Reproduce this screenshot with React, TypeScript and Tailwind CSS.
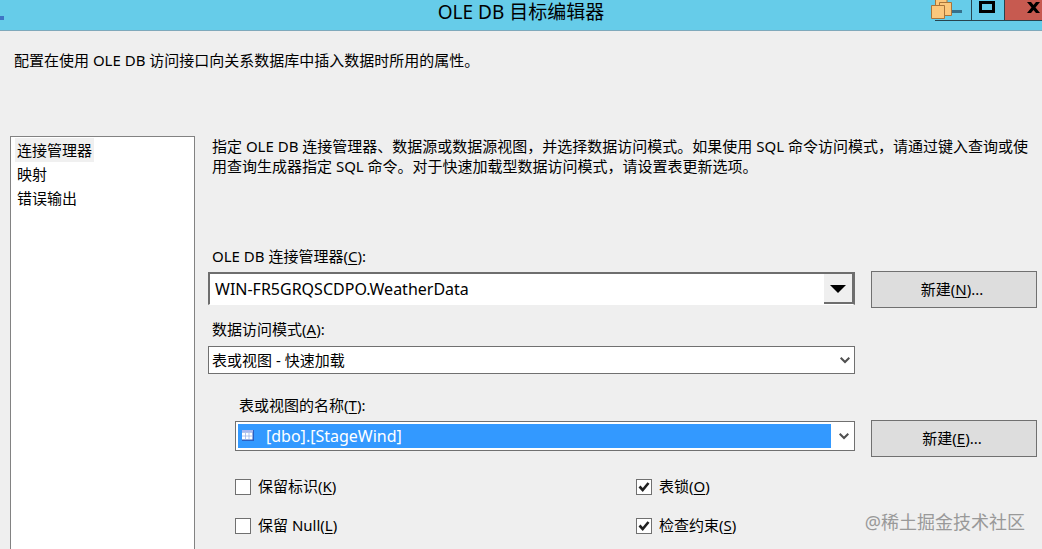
import { useState } from 'react';
import type { ReactNode } from 'react';

const pages = ['连接管理器', '映射', '错误输出'];

const options = [
  { id: 'keep-identity', text: '保留标识', accessKey: 'K', checked: false },
  { id: 'table-lock', text: '表锁', accessKey: 'O', checked: true },
  { id: 'keep-null', text: '保留 Null', accessKey: 'L', checked: false },
  { id: 'check-constraints', text: '检查约束', accessKey: 'S', checked: true },
];

function ChevronIcon() {
  return (
    <svg viewBox="0 0 10 8" className="pointer-events-none absolute right-[5px] top-1/2 h-2 w-2.5 -translate-y-1/2">
      <path d="M.7 1.700 L5 6 L9.300 1.700" fill="none" stroke="#505050" strokeWidth="2" />
    </svg>
  );
}

function FoldersIcon() {
  return (
    <svg viewBox="0 0 22 20" className="pointer-events-none absolute -left-1 top-0 h-5 w-[22px]">
      <g fill="#fbc77c" stroke="#a9743a">
        <path d="M4.500 -1 H16 V6 H4.500 Z" />
        <path d="M8.500 2.500 H20.500 V15.500 H8.500 Z" />
        <path d="M.5 5.500 H13.500 V18.500 H.5 Z" />
      </g>
    </svg>
  );
}

function TableIcon() {
  return (
    <svg viewBox="0 0 12 11" className="pointer-events-none absolute left-1.5 top-2 h-[11px] w-3">
      <path d="M0 0 H12 V11 H0 Z" fill="#2c5fc0" />
      <path d="M0 0 H11 V2.500 H0 Z" fill="#a9b9f0" />
      <path d="M0 2.500 H10.500 V9.500 H0 Z" fill="#fff" />
      <path d="M3.500 3 V9.500 M7 3 V9.500 M0 6 H10.500" stroke="#9db4ea" strokeWidth=".8" />
    </svg>
  );
}

function TitleBar() {
  return (
    <header className="relative flex h-[31px] shrink-0 items-start justify-end border-b border-[#7fa9bb] bg-[#66cce9]">
      <span className="absolute left-0 top-4 h-1 w-1 bg-[#3f74c4]" />
      <h1 className="absolute inset-x-0 top-0 text-center text-[19px] leading-6">OLE DB 目标编辑器</h1>
      <div className="relative flex h-[21px]">
        <button aria-label="最小化" className="relative w-9 border-b border-[#27444f]">
          <span className="absolute left-4 top-2.5 h-[3px] w-[11px] bg-[#34708c]" />
          <FoldersIcon />
        </button>
        <button aria-label="最大化" className="flex w-[34px] justify-center border-x border-b border-[#27444f] pr-0.5 pt-px">
          <span className="h-3 w-4 border-3 border-black" />
        </button>
        <button aria-label="关闭" className="flex w-[37px] justify-end border-b border-[#27444f] bg-[#c75a50] pr-0.5 pt-0.5">
          <svg viewBox="0 0 13 11" className="h-[11px] w-[13px]">
            <path d="M0 0 H4 L6.500 3 L9 0 H13 L8.500 5.500 L13 11 H9 L6.500 8 L4 11 H0 L4.500 5.500 Z" />
          </svg>
        </button>
      </div>
    </header>
  );
}

function FieldLabel({ id, accessKey, children }: { id: string; accessKey: string; children: ReactNode }) {
  return (
    <label htmlFor={id} className="block px-1 leading-5">
      {children}(<u className="underline-offset-2">{accessKey}</u>):
    </label>
  );
}

function NewButton({ accessKey }: { accessKey: string }) {
  return (
    <button className="h-[37px] border border-[#707070] bg-[#dddddd] pr-1">
      新建(<u className="underline-offset-2">{accessKey}</u>)...
    </button>
  );
}

export default function App() {
  const [page, setPage] = useState(pages[0]);
  const [checked, setChecked] = useState(options.filter((o) => o.checked).map((o) => o.id));

  const toggle = (id: string) => {
    setChecked((prev) => (prev.includes(id) ? prev.filter((item) => item !== id) : [...prev, id]));
  };

  return (
    <div className="relative flex h-screen flex-col overflow-hidden bg-[#efefef] font-['Noto_Sans','Noto_Sans_CJK_SC',sans-serif] text-[15px] text-black">
      <TitleBar />
      <p className="h-[105px] shrink-0 px-3.5 pt-[19px] leading-5">配置在使用 OLE DB 访问接口向关系数据库中插入数据时所用的属性。</p>

      <div className="flex min-h-0 flex-1 pl-2.5 pr-[5px]">
        <ul className="w-[185px] shrink-0 border border-b-0 border-[#828282] bg-white pl-1 pt-px">
          {pages.map((name) => (
            <li key={name} className="flex">
              <button
                onClick={() => setPage(name)}
                className={`h-6 px-0.5 leading-6 ${page === name ? 'bg-[#f0f0f0]' : ''}`}
              >
                {name}
              </button>
            </li>
          ))}
        </ul>

        <main className="ml-[13px] min-w-0 flex-1">
          <p className="h-[110px] px-1 leading-5">
            指定 OLE DB 连接管理器、数据源或数据源视图，并选择数据访问模式。如果使用 SQL 命令访问模式，请通过键入查询或使用查询生成器指定 SQL 命令。对于快速加载型数据访问模式，请设置表更新选项。
          </p>

          <FieldLabel id="connection" accessKey="C">OLE DB 连接管理器</FieldLabel>
          <div className="mt-[5px] grid grid-cols-[1fr_166px] items-start gap-x-4">
            <div className="relative mt-px">
              <select
                id="connection"
                className="block h-[33px] w-full appearance-none border-2 border-b border-[#6e6e6e] border-b-white bg-white pl-[5px] text-base"
              >
                <option>WIN-FR5GRQSCDPO.WeatherData</option>
              </select>
              <span className="pointer-events-none absolute bottom-px right-0.5 top-0.5 flex w-[29px] items-center justify-center border-b-2 border-r border-[#6e6e6e] bg-[#efefef] pt-0.5">
                <svg viewBox="0 0 16 8" className="h-2 w-4">
                  <path d="M0 0 H16 L8 8 Z" />
                </svg>
              </span>
            </div>
            <NewButton accessKey="N" />
          </div>

          <div className="mt-[11px] grid grid-cols-[1fr_166px] gap-x-4">
            <div>
              <FieldLabel id="access-mode" accessKey="A">数据访问模式</FieldLabel>
              <div className="relative mt-[7px]">
                <select
                  id="access-mode"
                  className="block h-7 w-full appearance-none border border-[#707070] bg-white pl-[3px]"
                >
                  <option>表或视图 - 快速加载</option>
                </select>
                <ChevronIcon />
              </div>
            </div>
          </div>

          <div className="mt-[21px] pl-[27px]">
            <FieldLabel id="table-name" accessKey="T">表或视图的名称</FieldLabel>
            <div className="mt-[5px] grid grid-cols-[1fr_166px] items-start gap-x-4">
              <div className="relative mt-px border border-[#707070] bg-white py-0.5 pl-0.5 pr-[23px]">
                <select
                  id="table-name"
                  className="block h-6 w-full appearance-none bg-[#3399ff] pl-7 text-base text-white"
                >
                  <option>[dbo].[StageWind]</option>
                </select>
                <TableIcon />
                <ChevronIcon />
              </div>
              <NewButton accessKey="E" />
            </div>

            <div className="mt-5 grid grid-cols-2 gap-y-[19px]">
              {options.map((option) => (
                <label key={option.id} htmlFor={option.id} className="flex h-5 items-start leading-[18px]">
                  <span className="relative mr-[7px] mt-0.5 h-4 w-4">
                    <input
                      id={option.id}
                      type="checkbox"
                      checked={checked.includes(option.id)}
                      onChange={() => toggle(option.id)}
                      className="block h-4 w-4 appearance-none border border-[#707070] bg-white"
                    />
                    {checked.includes(option.id) && (
                      <svg viewBox="0 0 16 16" className="pointer-events-none absolute inset-0 h-4 w-4">
                        <path d="M3.500 7.500 L6.700 11 L12.500 4" fill="none" stroke="#202020" strokeWidth="2.600" />
                      </svg>
                    )}
                  </span>
                  <span>
                    {option.text}(<u className="underline-offset-2">{option.accessKey}</u>)
                  </span>
                </label>
              ))}
            </div>
          </div>
        </main>
      </div>

      <span className="pointer-events-none absolute bottom-[15px] right-[17px] text-lg leading-6 text-[#999999]">
        @稀土掘金技术社区
      </span>
    </div>
  );
}
